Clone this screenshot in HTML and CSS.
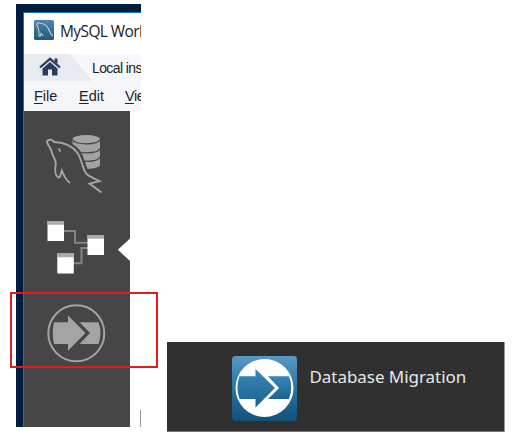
FILE: index.html
```
<!DOCTYPE html>
<html lang="en">
<head>
<meta charset="utf-8">
<title>MySQL Workbench</title>
<link rel="stylesheet" href="styles.css">
</head>
<body>
<main class="page">
  <section class="desktop">
    <div class="window">
      <header class="titlebar">
        <svg class="app-icon" viewBox="0 0 20 20">
          <defs><linearGradient id="app" x1="0" y1="0" x2="0" y2="1"><stop offset="0" stop-color="#4d87aa"/><stop offset="1" stop-color="#235979"/></linearGradient></defs>
          <rect width="20" height="20" rx="1.5" fill="url(#app)"/>
          <path d="M6.5 15.8C5.4 17 4.700 15.500 5 13.500C5.300 11 4 8 3 5C2.500 2.500 4.200 2.500 6 3.200C11 3.500 14 6.500 15.500 11C16.100 13 17.400 14.800 18.800 16M6.500 15.800L7 13.500L9.300 16" fill="none" stroke="#b9d0dc" stroke-width="1.1"/>
        </svg>
        <span class="title">MySQL Worl</span>
      </header>
      <nav class="tabs">
        <div class="home-tab">
          <svg class="home-icon" viewBox="0 0 22 19">
            <path d="M11 5L18.500 11.500V18.500H13V12.500H9V18.500H3.500V11.500Z" fill="#2c3e5d"/>
            <path d="M1 10.500L11 1.800L21 10.500" fill="none" stroke="#2c3e5d" stroke-width="2.300"/>
            <path d="M15.500 1.500H18.500V7L15.500 4.400Z" fill="#2c3e5d"/>
          </svg>
        </div>
        <span class="tab-label">Local ins</span>
      </nav>
      <nav class="menubar">
        <span class="file"><u>F</u>ile</span><span class="edit"><u>E</u>dit</span><span class="view"><u>V</u>ie</span>
      </nav>
      <div class="content">
        <aside class="sidebar">
          <svg class="entry" viewBox="24 111 106 95" height="95">
            <path d="M72.500 139V165.500C75 170 97 170 100 165.500V139Z" fill="#a2a2a2"/>
            <ellipse cx="86.300" cy="139.200" rx="13.800" ry="4.200" fill="#a5a5a5"/>
            <path d="M72.500 139.500C75 145.200 98 145.200 100 139.500M72.500 148.500C75 154.200 98 154.200 100 148.500M72.500 157C75 162.700 98 162.700 100 157" fill="none" stroke="#464646" stroke-width="1.300"/>
            <path d="M54.500 142C66 139 78 145 82 154C86 163 87 171 91 173.500L102 178L99.500 181.200L78 188L58 172L52 151Z" fill="#464646"/>
            <path d="M70 183C66 180 63.800 176 61.800 170.500C60.500 174 60.800 178 58.300 177.500C54.800 175.500 54.700 170 55.800 164C56 159 52.500 157 51.500 151C50.500 147 46.500 144 47.200 141.200C48 139 52 139.200 54.500 142C64 142.500 72 145 77.500 153C82 160 82.500 169 86.500 174C90 177 94.500 178.500 99.500 181.200L89.500 183.600L101.500 192.500" fill="none" stroke="#a5a5a5" stroke-width="1.900"/>
            <path d="M58 149C60 148 61 149 60 152Z" fill="#a5a5a5" stroke="#a5a5a5" stroke-width=".6"/>
          </svg>
          <svg class="entry" viewBox="24 206 106 84" height="84">
            <path d="M63 231H75V242.700H88M73 263.300H81.500V248H88" fill="none" stroke="#858585" stroke-width="2"/>
            <path d="M47.500 221H64V241H47.500ZM87.500 235H104V255H87.500ZM57.300 253.500H73.800V273.500H57.300Z" fill="#fff"/>
            <path d="M47.500 221H64V224.700H47.500ZM87.500 235H104V238.700H87.500ZM57.300 253.500H73.800V257.200H57.300Z" fill="#aaa"/>
            <path d="M130 238.500V261L117.800 249.700Z" fill="#fff"/>
          </svg>
          <svg class="entry" viewBox="24 290 106 85" height="85">
            <circle cx="76.300" cy="333.300" r="28" fill="none" stroke="#a4a4a4" stroke-width="2"/>
            <path d="M54 322.300H68V315.500L85.500 333L68 350.800V344H54Q51.500 333 54 322.300Z" fill="#a4a4a4"/>
            <path d="M79.500 322.300H98.500Q102.500 333 98.500 344H79.500L90 333Z" fill="#a4a4a4"/>
          </svg>
        </aside>
        <i class="caret"></i>
      </div>
    </div>
    <div class="highlight"></div>
  </section>
  <section class="migration">
    <svg class="migration-icon" viewBox="0 0 65 65">
      <defs>
        <linearGradient id="tile" x1="0" y1="0" x2="0" y2="1"><stop offset="0" stop-color="#579ac2"/><stop offset=".5" stop-color="#2876a5"/><stop offset="1" stop-color="#12517a"/></linearGradient>
        <linearGradient id="arrow" x1="0" y1="0" x2="0" y2="1"><stop offset="0" stop-color="#3987b7"/><stop offset="1" stop-color="#1b6391"/></linearGradient>
      </defs>
      <rect width="65" height="65" rx="3.500" fill="url(#tile)"/>
      <circle cx="32.500" cy="32" r="29" fill="#fff"/>
      <path d="M7.500 20.200H23.500V13L43 32L23.500 51.500V43H7.500Q3.300 31 7.500 20.200Z" fill="url(#arrow)"/>
      <path d="M36 20.200H57Q61.500 31 57 43H36L47 32Z" fill="url(#arrow)"/>
    </svg>
    <span class="migration-label">Database Migration</span>
  </section>
</main>
</body>
</html>
```
FILE: styles.css
```
* { box-sizing: border-box; }
body { margin: 0; background: #fff; }
.page {
  display: flex;
  width: 528px;
  height: 440px;
  padding: 4px 0 0 16px;
  overflow: hidden;
}
.desktop {
  position: relative;
  flex: none;
  width: 125px;
  height: 423px;
  padding: 8px 0 0 7px;
  background: #001d3f;
}
.window {
  height: 415px;
  overflow: hidden;
  border-top: 1px solid #1675bd;
  border-left: 1px solid #1675bd;
  background: #fff;
  white-space: nowrap;
}
.titlebar { display: flex; height: 41px; padding: 7px 0 0 10px; }
.app-icon { flex: none; width: 20px; height: 20px; }
.title {
  margin: -1px 0 0 6px;
  font: 15.500px/24px "Open Sans", sans-serif;
  letter-spacing: -.6px;
  color: #222;
}
.tabs { display: flex; height: 27px; background: #f6f7fa; }
.home-tab {
  flex: none;
  width: 68px;
  padding: 3px 0 0 15px;
  background: #e9ebf1;
  clip-path: polygon(0 0, 46px 0, 68px 100%, 0 100%);
}
.home-icon { display: block; width: 22px; height: 19px; }
.tab-label {
  font: 14px/28px "Liberation Sans", sans-serif;
  letter-spacing: -.6px;
  color: #222;
}
.menubar {
  display: flex;
  height: 30px;
  padding-left: 10px;
  background: #f5f6fa;
  font: 14.500px/31px "Liberation Sans", sans-serif;
  color: #222;
}
.menubar u { text-underline-offset: 2px; text-decoration-thickness: 1px; }
.file, .edit { flex: none; width: 45px; }
.view { margin-left: 1px; letter-spacing: -.5px; }
.content { display: flex; height: 316px; }
.sidebar { flex: none; width: 106px; background: #464646; }
.entry { display: block; width: 106px; }
.caret { width: 1px; height: 17px; margin: 299px 0 0 10px; background: #999; }
.highlight {
  position: absolute;
  left: -6px;
  top: 288px;
  width: 148px;
  height: 76px;
  border: 2px solid #e31b1c;
}
.migration {
  display: flex;
  flex: none;
  width: 338px;
  height: 90px;
  margin: 338px 0 0 25.500px;
  padding: 14px 0 0 65px;
  border-right: 1px solid #999;
  border-bottom: 1px solid #777;
  background: #303030;
}
.migration-icon { flex: none; width: 65px; height: 65px; }
.migration-label {
  margin: 9px 0 0 13px;
  font: 17px/24px "Noto Sans", sans-serif;
  letter-spacing: -.05px;
  color: #e5e7e9;
  white-space: nowrap;
}
```
